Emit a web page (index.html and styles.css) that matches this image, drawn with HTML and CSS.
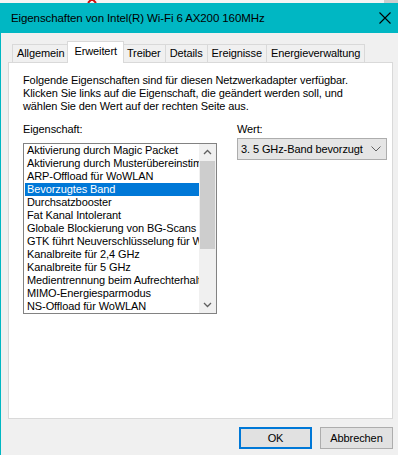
FILE: index.html
```html
<!DOCTYPE html>
<html lang="de">
<head>
<meta charset="utf-8">
<title>Eigenschaften</title>
<link rel="stylesheet" href="styles.css">
</head>
<body>
<div class="behind">
  <svg class="bx" width="14" height="3" viewBox="0 0 14 3"><path d="M1 -8 L11 3 M13 -8 L3 3" stroke="#d01010" stroke-width="2" fill="none"/></svg>
  <div class="bthumb"></div>
</div>
<div class="window">
  <div class="titlebar">
    <span class="title">Eigenschaften von Intel(R) Wi-Fi 6 AX200 160MHz</span>
    <svg class="close" width="12" height="12" viewBox="0 0 12 12"><path d="M0.5 0.5 L11.5 11.5 M11.5 0.5 L0.5 11.5" stroke="#000" stroke-width="1.1" fill="none"/></svg>
  </div>
  <div class="client">
    <div class="tabs">
      <div class="tab">Allgemein</div>
      <div class="tab active">Erweitert</div>
      <div class="tab">Treiber</div>
      <div class="tab">Details</div>
      <div class="tab">Ereignisse</div>
      <div class="tab">Energieverwaltung</div>
    </div>
    <div class="panel">
      <p class="intro">Folgende Eigenschaften sind für diesen Netzwerkadapter verfügbar.<br>Klicken Sie links auf die Eigenschaft, die geändert werden soll, und<br>wählen Sie den Wert auf der rechten Seite aus.</p>
      <div class="fields">
        <div class="col-left">
          <div class="label">Eigenschaft:</div>
          <div class="listbox">
            <ul class="items">
              <li>Aktivierung durch Magic Packet</li>
              <li>Aktivierung durch Musterübereinstimmung</li>
              <li>ARP-Offload für WoWLAN</li>
              <li class="sel">Bevorzugtes Band</li>
              <li>Durchsatzbooster</li>
              <li>Fat Kanal Intolerant</li>
              <li>Globale Blockierung von BG-Scans</li>
              <li>GTK führt Neuverschlüsselung für WoWLAN durch</li>
              <li>Kanalbreite für 2,4 GHz</li>
              <li>Kanalbreite für 5 GHz</li>
              <li>Medientrennung beim Aufrechterhalten</li>
              <li>MIMO-Energiesparmodus</li>
              <li>NS-Offload für WoWLAN</li>
            </ul>
            <div class="scrollbar">
              <svg class="arrow" width="17" height="17" viewBox="0 0 17 17"><path d="M5 10 L8.5 6.5 L12 10" stroke="#606060" stroke-width="1.3" fill="none"/></svg>
              <div class="track"><div class="thumb"></div></div>
              <svg class="arrow" width="17" height="17" viewBox="0 0 17 17"><path d="M5 7 L8.5 10.5 L12 7" stroke="#606060" stroke-width="1.3" fill="none"/></svg>
            </div>
          </div>
        </div>
        <div class="col-right">
          <div class="label">Wert:</div>
          <div class="combo">
            <span class="combo-text">3. 5 GHz-Band bevorzugt</span>
            <svg class="chev" width="10" height="6" viewBox="0 0 10 6"><path d="M0.5 0.5 L5 5 L9.5 0.5" stroke="#606060" stroke-width="1" fill="none"/></svg>
          </div>
        </div>
      </div>
    </div>
    <div class="buttons">
      <div class="btn default">OK</div>
      <div class="btn">Abbrechen</div>
    </div>
  </div>
</div>
</body>
</html>
```
FILE: styles.css
```css
*, *::before, *::after {
  box-sizing: border-box;
}
html, body {
  margin: 0;
  padding: 0;
}
body {
  width: 398px;
  height: 455px;
  overflow: hidden;
  background: #f0f0f0;
  font-family: "Liberation Sans", Arial, sans-serif;
  font-size: 11px;
  letter-spacing: -0.1px;
  color: #000;
}
.behind {
  height: 3px;
  overflow: hidden;
  background: #f4f4f4;
  display: flex;
  align-items: flex-start;
}
.bx {
  display: block;
  margin-left: 85px;
}
.bthumb {
  margin-left: auto;
  width: 14px;
  height: 3px;
  background: #cdcdcd;
}
.window {
  border-left: 1px solid #00b7c3;
  height: 452px;
  display: flex;
  flex-direction: column;
}
.titlebar {
  flex: none;
  height: 30px;
  background: #00b7c3;
  display: flex;
  align-items: center;
  justify-content: space-between;
  padding: 0 7px 0 10px;
  font-size: 11.5px;
}
.close {
  display: block;
}
.client {
  flex: 1;
  padding: 8px 5px 0 7px;
  display: flex;
  flex-direction: column;
}
.tabs {
  flex: none;
  display: flex;
  align-items: flex-end;
  padding-left: 4px;
  height: 21px;
  position: relative;
  z-index: 1;
}
.tab {
  height: 18px;
  line-height: 17px;
  padding: 0 4px;
  border: 1px solid #d9d9d9;
  border-bottom: none;
  margin-left: -1px;
  background: #f0f0f0;
}
.tab:first-child { margin-left: 0; }
.tab.active {
  height: 22px;
  line-height: 19px;
  background: #fff;
  margin-bottom: -1px;
  padding: 0 6px 2px;
  margin-left: -2px;
  margin-right: -1px;
  position: relative;
}
.panel {
  flex: none;
  height: 357px;
  background: #fff;
  border: 1px solid #d9d9d9;
  padding: 11px 4px 0 14px;
}
.intro {
  margin: 0;
  line-height: 13px;
}
.fields {
  display: flex;
  gap: 20px;
  margin-top: 10px;
}
.col-left {
  flex: none;
  width: 194px;
}
.col-right {
  flex: none;
  width: 150px;
}
.label {
  line-height: 13px;
  height: 13px;
}
.listbox {
  margin-top: 7px;
  height: 171px;
  border: 1px solid #828282;
  display: flex;
  background: #fff;
}
.items {
  list-style: none;
  margin: 0;
  padding: 0 0 0 1px;
  flex: 1;
  min-width: 0;
  overflow: hidden;
}
.items li {
  height: 13px;
  line-height: 13px;
  padding-left: 2px;
  white-space: nowrap;
  overflow: hidden;
}
.items li.sel {
  background: #0078d7;
  color: #fff;
}
.scrollbar {
  flex: none;
  width: 17px;
  background: #f0f0f0;
  display: flex;
  flex-direction: column;
}
.arrow {
  display: block;
  flex: none;
}
.track {
  flex: 1;
}
.thumb {
  height: 88px;
  margin: 0 1px;
  background: #cdcdcd;
}
.combo {
  margin-top: 2px;
  height: 22px;
  border: 1px solid #adadad;
  background: #e5e5e5;
  display: flex;
  align-items: center;
  justify-content: space-between;
  padding: 0 5px 0 3px;
  white-space: nowrap;
}
.combo-text {
  letter-spacing: -0.1px;
}
.chev {
  display: block;
  flex: none;
}
.buttons {
  flex: none;
  display: flex;
  justify-content: flex-end;
  gap: 8px;
  margin-top: 8px;
}
.btn {
  width: 73px;
  height: 22px;
  line-height: 20px;
  text-align: center;
  border: 1px solid #adadad;
  background: #e1e1e1;
}
.btn.default {
  border: 2px solid #0078d7;
  line-height: 18px;
}
```
